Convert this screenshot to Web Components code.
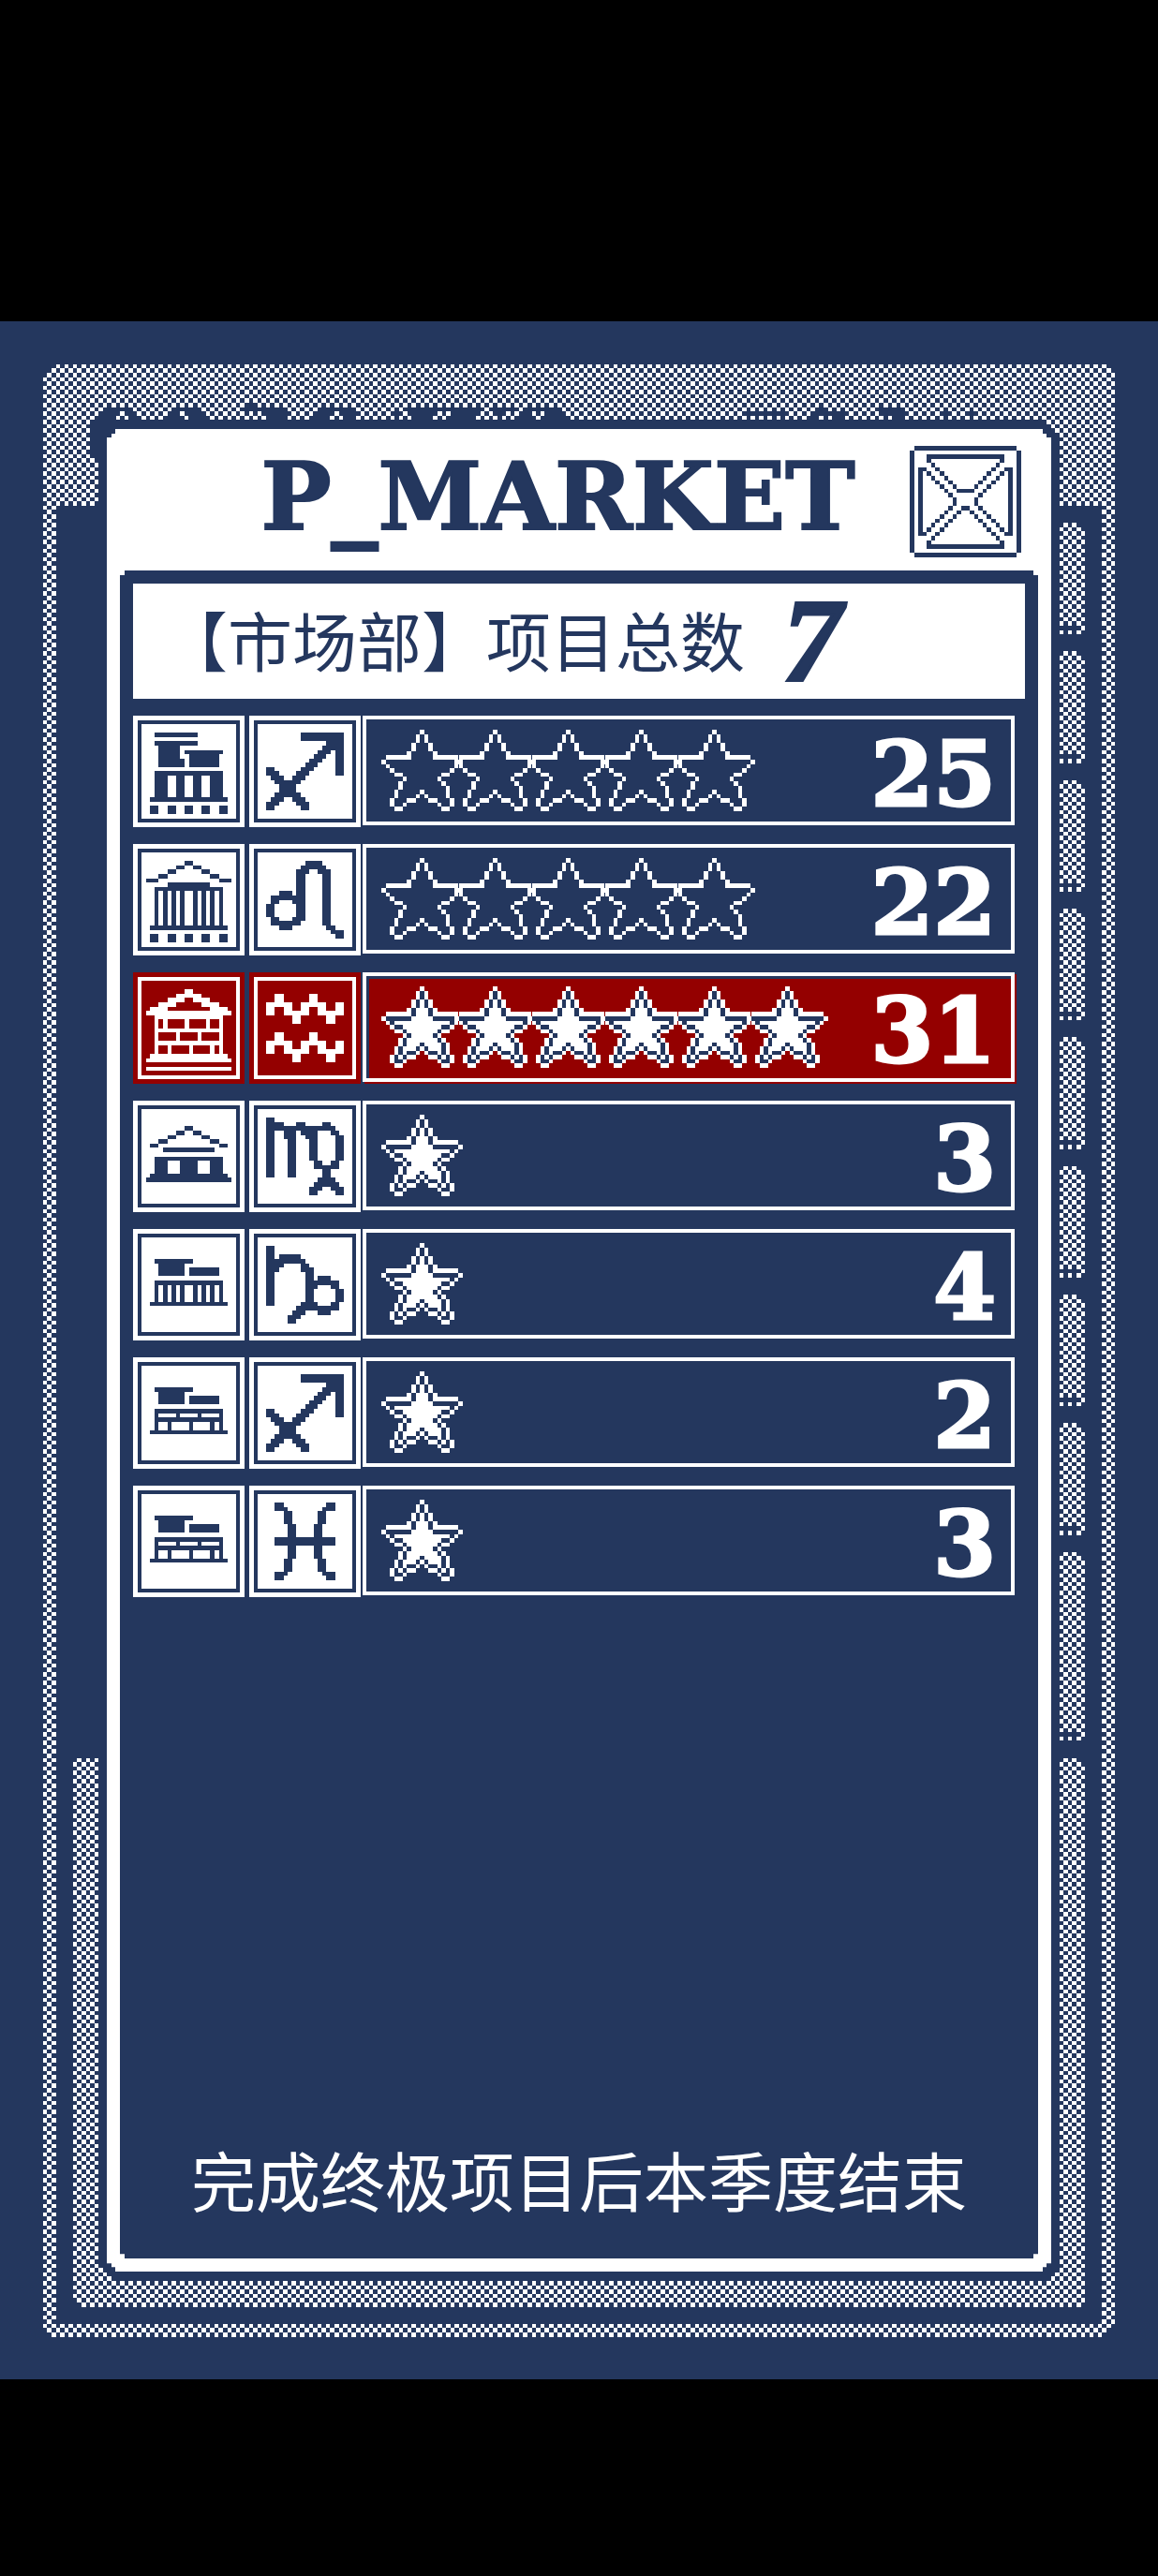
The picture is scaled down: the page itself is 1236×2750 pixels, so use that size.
<!DOCTYPE html>
<html lang="zh-CN">
<head>
    <meta charset="utf-8">
    <title>P_MARKET</title>
    <style>
        :root {
            --navy: #24375e;
            --red: #940000;
            --cjk: "Noto Sans CJK SC", sans-serif;
            --num: "DejaVu Serif", serif;
        }

        body {
            margin: 0;
            padding: 343px 0 209px;
            background: #000;
            color: #fff;
        }
    </style>
</head>
<body>
    <game-stage>
        <market-dialog>
            <span slot="title">P_MARKET</span>
            <market-total slot="total" label="【市场部】项目总数" value="7"></market-total>
            <span slot="note">完成终极项目后本季度结束</span>
        </market-dialog>
    </game-stage>

<script>
    // "x y w h, x y w h" on a pixel grid -> svg path data
    function boxes(list) {
        return list.split(',').map(item => {
            const [x, y, w, h] = item.trim().split(' ').map(Number);
            return `M${x} ${y}h${w}v${h}h${-w}z`;
        }).join('');
    }

    function columns(y, h) {
        return [5, 7, 9, 11, 14, 16, 18, 20].map(x => `${x} ${y} 1 ${h}`).join(',');
    }

    const shop = '5 7 9 1,6 8 6 3,13 9 7 2';
    const icons = {
        bank: '5 4 10 1,5 6 10 1,6 7 5 5,11 10 1 2,12 8 9 1,13 9 7 3,5 13 16 1,5 14 3 5,10 14 2 5,14 14 2 5,18 14 3 5,4 19 18 1,4 21 2 2,8 21 2 2,12 21 2 2,16 21 2 2,20 21 2 2',
        temple: '12 4 2 1,10 5 2 1,14 5 2 1,8 6 2 1,16 6 2 1,6 7 2 1,18 7 2 1,3 8 3 1,20 8 3 1,8 9 10 1,5 10 16 1,' + columns(11, 8) + ',4 19 18 1,4 21 2 2,8 21 2 2,12 21 2 2,16 21 2 2,20 21 2 2',
        brick: '12 4 2 1,10 5 6 1,8 6 4 1,14 6 4 1,6 7 4 1,16 7 4 1,4 8 4 1,18 8 4 1,3 9 20 1,5 10 16 9,6 11 1 2,8 11 4 2,13 11 4 2,18 11 2 2,6 14 4 2,11 14 4 2,16 14 4 2,6 17 2 2,9 17 4 2,14 17 4 2,19 17 1 2,4 19 18 1,3 20 20 1,3 22 20 1',
        house: '12 6 2 1,10 7 2 1,14 7 2 1,8 8 2 1,16 8 2 1,6 9 2 1,18 9 2 1,4 10 2 1,20 10 2 1,7 11 12 1,5 13 16 4,8 14 3 3,15 14 3 3,4 17 18 1,3 18 20 1',
        store: shop + ',5 12 16 1,' + columns(13, 4) + ',4 17 18 1',
        stall: shop + ',5 12 16 5,6 13 4 1,11 13 4 1,16 13 4 1,6 15 2 2,9 15 4 2,14 15 4 2,19 15 1 2,4 17 18 1',
        sagittarius: '12 4 10 2,20 6 2 8,18 6 2 1,17 7 3 1,16 8 3 1,15 9 3 1,14 10 3 1,13 11 3 1,12 12 3 1,11 13 3 1,10 14 3 1,4 12 2 1,4 13 3 1,5 14 3 1,6 15 6 1,7 16 4 2,6 18 6 1,5 19 3 1,10 19 3 1,4 20 3 1,11 20 3 1,4 21 2 1,12 21 2 1',
        leo: '13 4 4 1,12 5 6 1,11 6 3 1,16 6 3 1,11 7 2 10,17 7 2 12,18 19 2 1,19 20 3 1,20 21 2 1,7 11 3 1,5 12 6 1,5 13 2 1,10 13 1 1,4 14 2 3,5 17 2 1,10 17 3 1,5 18 7 1,7 19 3 1',
        aquarius: ['4 7', '6 5', '8 7', '10 9', '12 7', '14 5', '16 7', '18 9', '20 7', '4 16', '6 14', '8 16', '10 18', '12 16', '14 14', '16 16', '18 18', '20 16'].map(p => p + ' 2 3').join(','),
        virgo: '4 4 2 14,6 5 2 2,11 5 2 1,17 5 2 1,8 6 12 1,8 7 3 2,12 7 4 1,19 7 2 1,13 8 1 1,9 9 2 9,14 8 2 6,20 8 2 6,15 14 2 1,19 14 2 1,15 15 6 1,17 16 2 2,16 18 4 1,15 19 3 1,18 19 3 1,14 20 3 1,19 20 3 1,14 21 2 1,20 21 2 1',
        capricorn: '4 4 2 14,7 6 5 1,6 7 7 1,6 8 2 1,12 8 2 1,6 9 1 1,12 9 3 1,13 10 2 8,16 11 3 1,15 12 6 1,15 13 1 1,19 13 2 1,20 14 2 3,15 17 1 1,19 17 2 1,12 17 1 1,11 18 10 1,10 19 3 1,16 19 3 1,9 20 3 1,9 21 2 1',
        pisces: '6 4 2 1,18 4 2 1,6 5 3 1,17 5 3 1,8 6 2 3,16 6 2 3,9 9 2 3,15 9 2 3,6 12 14 2,9 14 2 3,15 14 2 3,8 17 2 3,16 17 2 3,6 20 3 1,17 20 3 1,6 21 2 1,18 21 2 1',
        close: closeIcon()
    };

    function closeIcon() {
        const out = ['1 0 24 1', '0 1 1 24', '25 1 1 24', '1 25 24 1', '4 2 18 1', '4 3 1 1', '21 3 1 1', '4 22 1 1', '21 22 1 1', '4 23 18 1',
            '11 10 4 1', '12 14 2 1', '2 5 1 16', '23 5 1 16', '3 5 1 1', '22 5 1 1', '3 20 1 1', '22 20 1 1', '10 12 1 1', '15 12 1 1'];
        for (let i = 0; i < 6; i++) {
            out.push(`${5 + i} ${4 + i} 1 1`, `${20 - i} ${4 + i} 1 1`);
            out.push(`${4 + i} ${6 + i} 1 1`, `${21 - i} ${6 + i} 1 1`);
        }
        for (let i = 0; i < 7; i++) {
            out.push(`${5 + i} ${21 - i} 1 1`, `${20 - i} ${21 - i} 1 1`);
            out.push(`${10 - i} ${13 + i} 1 1`, `${15 + i} ${13 + i} 1 1`);
        }
        return out.join(',');
    }

    // # outline, + body, o shade
    const star = [
        '.........#.........',
        '........#o#........',
        '........#o#........',
        '.......#o+o#.......',
        '.......#o+o#.......',
        '......#o+++o#......',
        '.######o+++o######.',
        '#oooooo+++++oooooo#',
        '.#o+++++++++++++o#.',
        '..#oo+++++++++oo#..',
        '...##o+++++++o##...',
        '.....#o+++++o#.....',
        '....#o+++++++o#....',
        '....#o+++o++++o#...',
        '...#o+++o#o+++o#...',
        '...#o+oo#.#oo+o#...',
        '..#o+o##...##o+o#..',
        '..#oo#.......#oo#..',
        '...##.........##...'
    ];

    function starPath(chars) {
        const out = [];
        star.forEach((row, y) => {
            [...row].forEach((c, x) => {
                if (chars.includes(c)) out.push(`${x} ${y} 1 1`);
            });
        });
        return boxes(out.join(','));
    }

    class PixelIcon extends HTMLElement {
        connectedCallback() {
            const root = this.attachShadow({ mode: 'open' });
            const frame = this.hasAttribute('framed') ? 'M1 1h24v24h-24zM2 2v22h22v-22z' : '';
            root.innerHTML = `
                <style>
                    :host { display: block; width: 119px; height: 119px; flex: none; }
                    svg { display: block; width: 100%; height: 100%; }
                </style>
                <svg viewBox="0 0 26 26" shape-rendering="crispEdges" aria-hidden="true">
                    <path fill="currentColor" fill-rule="evenodd" d="${frame}${boxes(icons[this.getAttribute('name')])}"/>
                </svg>`;
        }
    }
    customElements.define('pixel-icon', PixelIcon);

    class PixelStar extends HTMLElement {
        connectedCallback() {
            const full = this.hasAttribute('full');
            this.attachShadow({ mode: 'open' }).innerHTML = `
                <style>
                    :host { display: block; width: 87px; height: 87px; flex: none; }
                    svg { display: block; width: 100%; height: 100%; }
                </style>
                <svg viewBox="0 0 19 19" shape-rendering="crispEdges" aria-hidden="true">
                    <path fill="#24375e" d="${full ? starPath('o') : ''}"/>
                    <path fill="#fff" d="${starPath(full ? '#+' : '#')}"/>
                </svg>`;
        }
    }
    customElements.define('pixel-star', PixelStar);

    class ProjectRow extends HTMLElement {
        connectedCallback() {
            const count = Number(this.getAttribute('stars'));
            const full = this.hasAttribute('full') ? 'full' : '';
            this.attachShadow({ mode: 'open' }).innerHTML = `
                <style>
                    :host { display: flex; align-items: flex-start; gap: 5px; }
                    pixel-icon { background: #fff; color: var(--navy); }
                    .bar {
                        flex: 1;
                        display: flex;
                        align-items: center;
                        justify-content: space-between;
                        box-sizing: border-box;
                        height: 117px;
                        margin-left: -3px;
                        padding: 0 16px;
                        border: 4px solid #fff;
                    }
                    .stars { display: flex; }
                    .stars > * + * { margin-left: -9px; }
                    .score {
                        padding-top: 8px;
                        font: bold 96px/100px var(--num);
                        -webkit-text-stroke: 3px currentColor;
                    }
                    :host([active]) pixel-icon { background: var(--red); color: #fff; }
                    :host([active]) .bar {
                        background: var(--red);
                        box-shadow: inset 3px 3px var(--navy), 2px 2px var(--red);
                    }
                </style>
                <pixel-icon framed name="${this.getAttribute('building')}"></pixel-icon>
                <pixel-icon framed name="${this.getAttribute('sign')}"></pixel-icon>
                <div class="bar">
                    <div class="stars">${`<pixel-star ${full}></pixel-star>`.repeat(count)}</div>
                    <span class="score"><slot></slot></span>
                </div>`;
        }
    }
    customElements.define('project-row', ProjectRow);

    class MarketTotal extends HTMLElement {
        connectedCallback() {
            this.attachShadow({ mode: 'open' }).innerHTML = `
                <style>
                    :host {
                        display: flex;
                        align-items: center;
                        gap: 40px;
                        height: 123px;
                        padding-left: 32px;
                        background: #fff;
                        color: var(--navy);
                        white-space: nowrap;
                    }
                    .label { padding-bottom: 6px; font: 400 69px/100px var(--cjk); }
                    .value {
                        font: italic bold 128px/123px "Liberation Serif", serif;
                        -webkit-text-stroke: 3px currentColor;
                    }
                </style>
                <span class="label">${this.getAttribute('label')}</span>
                <span class="value">${this.getAttribute('value')}</span>`;
        }
    }
    customElements.define('market-total', MarketTotal);

    const projects = [
        { building: 'bank', sign: 'sagittarius', stars: 5, score: 25 },
        { building: 'temple', sign: 'leo', stars: 5, score: 22 },
        { building: 'brick', sign: 'aquarius', stars: 6, score: 31, full: true, active: true },
        { building: 'house', sign: 'virgo', stars: 1, score: 3, full: true },
        { building: 'store', sign: 'capricorn', stars: 1, score: 4, full: true },
        { building: 'stall', sign: 'sagittarius', stars: 1, score: 2, full: true },
        { building: 'stall', sign: 'pisces', stars: 1, score: 3, full: true }
    ];

    class MarketDialog extends HTMLElement {
        connectedCallback() {
            const rows = projects.map(p => `
                <project-row building="${p.building}" sign="${p.sign}" stars="${p.stars}"
                    ${p.full ? 'full' : ''} ${p.active ? 'active' : ''}>${p.score}</project-row>`).join('');
            this.attachShadow({ mode: 'open' }).innerHTML = `
                <style>
                    :host {
                        display: flex;
                        flex-direction: column;
                        flex: 1;
                        min-width: 0;
                        padding: 0 14px 14px;
                        background: #fff;
                        clip-path: polygon(
                            9px 0, calc(100% - 9px) 0, calc(100% - 9px) 5px, calc(100% - 5px) 5px, calc(100% - 5px) 9px, 100% 9px,
                            100% calc(100% - 9px), calc(100% - 5px) calc(100% - 9px), calc(100% - 5px) calc(100% - 5px),
                            calc(100% - 9px) calc(100% - 5px), calc(100% - 9px) 100%,
                            9px 100%, 9px calc(100% - 5px), 5px calc(100% - 5px), 5px calc(100% - 9px), 0 calc(100% - 9px),
                            0 9px, 5px 9px, 5px 5px, 9px 5px);
                    }
                    header {
                        display: flex;
                        height: 133px;
                        padding: 18px 18px 0 92px;
                        color: var(--navy);
                    }
                    h1 {
                        flex: 1;
                        margin: 0;
                        text-align: center;
                        font: bold 100px/108px var(--num);
                        -webkit-text-stroke: 2px currentColor;
                    }
                    button {
                        width: 119px;
                        height: 119px;
                        padding: 0;
                        border: 0;
                        background: none;
                        color: inherit;
                        cursor: pointer;
                    }
                    .panel {
                        flex: 1;
                        display: flex;
                        flex-direction: column;
                        padding: 14px;
                        background: var(--navy);
                        clip-path: polygon(
                            5px 0, calc(100% - 5px) 0, calc(100% - 5px) 5px, 100% 5px,
                            100% calc(100% - 5px), calc(100% - 5px) calc(100% - 5px), calc(100% - 5px) 100%,
                            5px 100%, 5px calc(100% - 5px), 0 calc(100% - 5px), 0 5px, 5px 5px);
                    }
                    .rows {
                        display: flex;
                        flex-direction: column;
                        gap: 18px;
                        margin: 18px 11px 0 0;
                    }
                    footer {
                        margin-top: auto;
                        padding-bottom: 21px;
                        text-align: center;
                        font: 400 69px/100px var(--cjk);
                    }
                </style>
                <header>
                    <h1><slot name="title"></slot></h1>
                    <button type="button" aria-label="关闭"><pixel-icon name="close"></pixel-icon></button>
                </header>
                <div class="panel">
                    <slot name="total"></slot>
                    <div class="rows">${rows}</div>
                    <footer><slot name="note"></slot></footer>
                </div>`;
            this.shadowRoot.querySelector('button').addEventListener('click', () => this.remove());
        }
    }
    customElements.define('market-dialog', MarketDialog);

    // tops of the headline behind the dialog, [row, first, last]
    const letters = [
        [19, 58, 58],
        [20, 24, 30], [20, 40, 46], [20, 57, 66], [20, 74, 81], [20, 95, 112], [20, 115, 120], [20, 122, 130], [20, 191, 191], [20, 205, 210],
        [21, 23, 27], [21, 29, 31], [21, 39, 41], [21, 43, 47], [21, 57, 57], [21, 59, 59], [21, 61, 66], [21, 73, 77], [21, 79, 82],
        [21, 91, 92], [21, 95, 101], [21, 105, 111], [21, 115, 116], [21, 121, 123], [21, 127, 131],
        [21, 174, 182], [21, 189, 197], [21, 205, 208], [21, 210, 211], [21, 220, 220], [21, 226, 227],
        [22, 22, 26], [22, 30, 32], [22, 38, 42], [22, 44, 48], [22, 56, 56], [22, 62, 66], [22, 72, 76], [22, 80, 82], [22, 92, 92],
        [22, 96, 100], [22, 105, 110], [22, 121, 124], [22, 126, 132], [22, 189, 190], [22, 194, 196], [22, 208, 210]
    ];

    function inSegment(x, y) {
        for (let s = 47; s < 300; s += 30) {
            const end = s === 287 ? 331 : s + 26;
            if (y < s || y >= end) continue;
            if (y === s) return x < 251;
            if (y === end - 2) return x === 252;
            return y < end - 1 || x < 252;
        }
        return y >= 335 && (y > 335 || x < 251);
    }

    function lit(x, y) {
        if ((x + y) % 2 === 0) return false;
        const dx = Math.min(x - 10, 259 - x);
        if (y < 13 && dx + y - 10 < 2) return false;
        if (y > 466 && dx + 469 - y < 2) return false;
        if (dx < 3 || y >= 467) return true;
        if (y < 43) {
            if (letters.some(([row, a, b]) => row === y && x >= a && x <= b)) return false;
            if (x < 23) return !(x > 20 && y >= 23 && y < 32) && !(x === 22 && y === 32);
            if (y < 23) return true;
            return x > 246 || x - 246 + 26 - y > 0 && x > 240;
        }
        if (x < 17 || x > 252 || y > 462) return false;
        if (y > 460 && Math.min(x - 17, 252 - x) + 462 - y < 2 && x < 100) return false;
        if (x > 246) return inSegment(x, y);
        if (y < 335) return false;
        if (x < 23 || y > 456) return true;
        return Math.min(x - 23, 246 - x) + 456 - y < 3;
    }

    class GameStage extends HTMLElement {
        connectedCallback() {
            let d = '';
            for (let y = 10; y < 470; y++) {
                for (let x = 10; x < 260; x++) {
                    if (lit(x, y)) d += `M${x} ${y}h1v1h-1z`;
                }
            }
            this.attachShadow({ mode: 'open' }).innerHTML = `
                <style>
                    :host {
                        position: relative;
                        display: flex;
                        box-sizing: border-box;
                        aspect-ratio: 270 / 480;
                        padding: 115px 114px;
                        background: var(--navy);
                    }
                    svg { position: absolute; inset: 0; width: 100%; height: 100%; }
                    ::slotted(*) { position: relative; }
                </style>
                <svg viewBox="0 0 270 480" preserveAspectRatio="none" shape-rendering="crispEdges" aria-hidden="true">
                    <path fill="#fff" d="${d}"/>
                </svg>
                <slot></slot>`;
        }
    }
    customElements.define('game-stage', GameStage);
</script>
</body>
</html>
